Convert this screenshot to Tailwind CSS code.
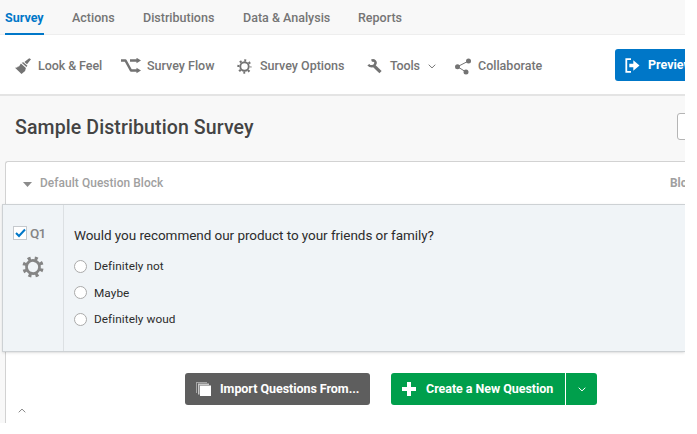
<!DOCTYPE html>
<html lang="en">
<head>
<meta charset="utf-8">
<title>Survey Editor</title>
<script src="https://cdn.jsdelivr.net/npm/@tailwindcss/browser@4"></script>
</head>
<body class="h-[434px] overflow-hidden bg-white font-['Roboto','Liberation_Sans',sans-serif] font-medium whitespace-nowrap">
<div class="flex h-[423px] w-[685px] flex-col overflow-hidden bg-[#f8f8f8]">
  <nav class="flex h-[35px] shrink-0 border-b border-[#eeeeee] pl-[5px] text-[12.5px] leading-[35px] text-[#757575]">
    <a class="h-[35px] w-[39px] border-b-2 border-[#0077c8] font-bold text-[#0077c8]">Survey</a>
    <a class="ml-7 w-[71px]">Actions</a>
    <a class="w-[100px]">Distributions</a>
    <a class="w-[115px]">Data &amp; Analysis</a>
    <a>Reports</a>
  </nav>
  <div class="flex h-[61px] shrink-0 items-center border-b-2 border-[#e4e4e4] bg-white pt-[3px] pl-[15px] text-[12.5px] text-[#757575]">
    <div class="flex w-[106px] shrink-0 items-center">
      <svg class="mr-[7px] h-4 w-4" viewBox="0 0 16 16" fill="#737373"><path d="M14.2.2 16 1.3l-4 5L9.400 4zM8.300 4.200l4.100 3.500-1 1.300-4.700-4.200zM5.900 5.500l5 4.500-.8 3-3.600 2.900L0 9.800l2.200-.3 1-1.500.5 1z"/></svg>
      <span class="tracking-[-0.08px]">Look &amp; Feel</span>
    </div>
    <div class="flex w-[116px] shrink-0 items-center">
      <svg class="mr-[6px] h-4 w-5" viewBox="0 0 20 16" fill="none"><path d="M0 2.500h4.500L10 12.500h6M9 2.500h7" stroke="#737373" stroke-width="2.500" stroke-linejoin="round"/><path d="M15.500-.3v5.600l4.500-2.800zM15.500 9.700v5.600l4.500-2.800z" fill="#737373"/></svg>
      <span>Survey Flow</span>
    </div>
    <div class="flex w-[130px] shrink-0 items-center">
      <svg class="mr-2 h-[15px] w-[15px]" viewBox="0 0 32 32"><g transform="translate(16 16)" fill="none" stroke="#737373"><circle r="9" stroke-width="4"/><circle r="13" stroke-width="4.500" stroke-dasharray="4.200 6.010" stroke-dashoffset="2.100"/></g></svg>
      <span>Survey Options</span>
    </div>
    <div class="flex w-[88px] shrink-0 items-center">
      <svg class="mr-2 h-[15px] w-[15px]" viewBox="0 0 15 15" fill="none" stroke="#737373"><path d="M4.500 1.700C7.200.6 9.500 3 8.100 5.200 6.800 8 3.200 7.900 1.300 5.700" stroke-width="2.500"/><path d="m7.300 7.200 6.200 6" stroke-width="3.200"/></svg>
      <span class="tracking-[-0.15px]">Tools</span>
      <svg class="mt-px ml-2 h-[5px] w-2" viewBox="0 0 8 5" fill="none" stroke="#777"><path d="m.7.700 3.300 3.200L7.300.700"/></svg>
    </div>
    <div class="flex w-[160px] shrink-0 items-center">
      <svg class="mr-[7px] h-[17px] w-4" viewBox="0 0 16 17" fill="#737373"><path d="M13.500 3 2.500 8.700 11 14" fill="none" stroke="#737373"/><circle cx="13.500" cy="3" r="2.500"/><circle cx="2.500" cy="8.700" r="2.500"/><circle cx="11" cy="14" r="2.500"/></svg>
      <span>Collaborate</span>
    </div>
    <button class="mt-[-2px] flex h-8 w-[100px] shrink-0 items-center rounded-[3px] bg-[#0077c8] pl-[10px] font-bold text-white">
      <svg class="mr-2 h-[15px] w-[15px]" viewBox="0 0 15 15"><path d="M6 1.200H1.300v12.600H6" fill="none" stroke="#fff" stroke-width="1.800"/><path d="M4.300 5.700h4V2.300L14.500 7.500l-6.200 5.200V9.300h-4z" fill="#fff"/></svg>
      <span>Preview</span>
    </button>
  </div>
  <header class="flex h-[65px] shrink-0 items-center pl-[15px] text-[#444]">
    <h1 class="-mt-[2px] w-[662px] shrink-0 text-[19.5px] font-medium tracking-[0.11px]">Sample Distribution Survey</h1>
    <button class="mt-[-4px] h-[27px] w-10 shrink-0 rounded-[3px] border border-[#b5b5b5] bg-white"></button>
  </header>
  <section class="ml-[5px] flex grow flex-col rounded-tl-[3px] border-t border-l border-[#d2d2d2] bg-white">
    <div class="flex h-[42px] shrink-0 items-center pt-[2px] pl-[17px] text-[11.900px] text-[#a0a0a0]">
      <svg class="mr-[8px] h-[5px] w-[9px] shrink-0" viewBox="0 0 9 5" fill="#8b8b8b"><path d="M0 0h9L4.500 5z"/></svg>
      <span class="w-[630px] shrink-0 tracking-[0.08px]">Default Question Block</span>
      <span class="font-bold">Block</span>
    </div>
    <article class="-ml-[4px] flex h-[148px] shrink-0 border border-r-0 border-[#cdd1d4] bg-[#f0f4f7] shadow-sm">
      <aside class="flex w-[61px] flex-col border-r border-[#dce0e3]">
        <div class="mt-[18px] ml-[10px] flex items-center text-[13.500px] font-medium text-[#858585]">
          <span class="mr-[3px] flex h-[14px] w-[14px] items-center justify-center border border-[#c5c9cd] bg-white"><svg class="h-[10px] w-[11px]" viewBox="0 0 11 10" fill="none" stroke="#0077c8" stroke-width="2"><path d="m1 5 3 3 6-6.500"/></svg></span>
          <span class="tracking-[-0.9px]">Q1</span>
        </div>
        <svg class="mt-[13px] ml-[19px] h-[22px] w-[22px]" viewBox="0 0 32 32"><g transform="translate(16 16) rotate(9)" fill="none" stroke="#858585"><circle r="9.500" stroke-width="4"/><circle r="13" stroke-width="5" stroke-dasharray="4.500 5.710"/></g></svg>
      </aside>
      <div class="pt-[20px] pl-[10px] text-[#2c2c2c]">
        <p class="mb-[11px] text-[13.500px] leading-5 font-normal tracking-[-0.05px]">Would you recommend our product to your friends or family?</p>
        <ul class="flex flex-col gap-[6.500px] text-[11.800px] leading-5 font-normal tracking-[0.06px]">
          <li class="flex items-center"><i class="mr-[7px] h-[13px] w-[13px] rounded-full border border-[#aaa] bg-white"></i>Definitely not</li>
          <li class="flex items-center"><i class="mr-[7px] h-[13px] w-[13px] rounded-full border border-[#aaa] bg-white"></i>Maybe</li>
          <li class="flex items-center"><i class="mr-[7px] h-[13px] w-[13px] rounded-full border border-[#aaa] bg-white"></i>Definitely woud</li>
        </ul>
      </div>
    </article>
    <div class="flex pt-[21px] pl-[179px] text-[12.500px] font-bold text-white">
      <button class="mr-[21px] flex h-8 w-[185px] items-center rounded-[3px] bg-[#5e5e5e] pl-[11px]">
        <svg class="mr-[9px] h-[14px] w-[15px]" viewBox="0 0 15 14"><path d="M0 0h11v11H0z" fill="#a5a5a5"/><path d="M1 1h12v11H1z" fill="#5e5e5e"/><path d="M2 1.500h11v11H2z" fill="#c8c8c8"/><path d="M3.500 3h11.500v11H3.500z" fill="#5e5e5e"/><path d="M4 3.500h11V14H4z" fill="#fff"/></svg>
        <span class="tracking-[-0.05px]">Import Questions From...</span>
      </button>
      <button class="flex h-8 w-[174px] items-center rounded-l-[3px] bg-[#009f4c] pl-[11px]">
        <svg class="mr-[10px] h-[14px] w-[14px]" viewBox="0 0 14 14" fill="#fff"><path d="M5 0h4v5h5v4H9v5H5V9H0V5h5z"/></svg>
        <span class="tracking-[-0.05px]">Create a New Question</span>
      </button>
      <button class="flex h-8 w-8 items-center justify-center rounded-r-[3px] border-l border-white bg-[#009f4c]">
        <svg class="h-[5px] w-2" viewBox="0 0 8 5" fill="none" stroke="#fff"><path d="m.7.700 3.300 3.200L7.300.700"/></svg>
      </button>
    </div>
    <svg class="mt-[3px] ml-3 h-[5px] w-2" viewBox="0 0 8 5" fill="none" stroke="#888"><path d="m.7 4.300 3.300-3.200 3.300 3.200"/></svg>
  </section>
</div>
</body>
</html>
